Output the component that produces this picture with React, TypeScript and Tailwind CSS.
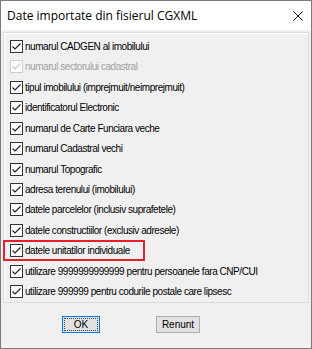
import React from 'react';

interface Item {
  label: string;
  disabled?: boolean;
  marked?: boolean;
}

const items: Item[] = [
  { label: 'numarul CADGEN al imobilului' },
  { label: 'numarul sectorului cadastral', disabled: true },
  { label: 'tipul imobilului (imprejmuit/neimprejmuit)' },
  { label: 'identificatorul Electronic' },
  { label: 'numarul de Carte Funciara veche' },
  { label: 'numarul Cadastral vechi' },
  { label: 'numarul Topografic' },
  { label: 'adresa terenului (imobilului)' },
  { label: 'datele parcelelor (inclusiv suprafetele)' },
  { label: 'datele constructiilor (exclusiv adresele)' },
  { label: 'datele unitatilor individuale', marked: true },
  { label: 'utilizare 9999999999999 pentru persoanele fara CNP/CUI' },
  { label: 'utilizare 999999 pentru codurile postale care lipsesc' },
];

const CheckBox: React.FC<{ disabled?: boolean }> = ({ disabled }) => (
  <span
    className={`flex h-[13px] w-[13px] shrink-0 items-center justify-center border bg-white ${
      disabled ? 'border-[#cccccc]' : 'border-[#333333]'
    }`}
  >
    <svg width="11" height="11" viewBox="0 0 11 11">
      <path
        d="M1.5 5.5 L4 8 L9.5 2.5"
        fill="none"
        stroke={disabled ? '#c4c4c4' : '#222222'}
        strokeWidth="1.2"
      />
    </svg>
  </span>
);

const Row: React.FC<{ item: Item }> = ({ item }) => (
  <div className="relative flex h-[20.8px] items-center gap-[2px] pl-[6px]">
    {item.marked && (
      <div className="absolute left-[-1px] top-[-1px] h-[21px] w-[142px] border-2 border-[#e4212b]" />
    )}
    <CheckBox disabled={item.disabled} />
    <span className={item.disabled ? 'text-[#a0a0a0]' : 'text-black'}>{item.label}</span>
  </div>
);

export default function App() {
  return (
    <div
      className="flex h-[349px] w-[312px] flex-col border border-[#7a7a7a] bg-[#f0f0f0] text-[10px] tracking-[-0.45px]"
      style={{ fontFamily: '"Liberation Sans", Arial, sans-serif' }}
    >
      <div className="flex h-[29px] shrink-0 items-center justify-between bg-white pl-[6px] pr-[8px]">
        <span className="text-[12px] tracking-normal text-black" style={{ fontFamily: '"Open Sans", sans-serif' }}>
          Date importate din fisierul CGXML
        </span>
        <svg width="10" height="10" viewBox="0 0 10 10">
          <path d="M0.5 0.5 L9.5 9.5 M9.5 0.5 L0.5 9.5" stroke="#111" strokeWidth="1" />
        </svg>
      </div>
      <div className="mx-[2px] mt-[2px] flex h-[271px] flex-col border border-[#dcdcdc] pt-[3px] shadow-[inset_1px_1px_0_#ffffff]">
        {items.map((item) => (
          <Row key={item.label} item={item} />
        ))}
      </div>
      <div className="flex gap-[56px] pl-[61px] pt-[13px] tracking-normal">
        <button className="flex h-[17px] w-[38px] items-center justify-center border border-[#0078d7] bg-[#e1e1e1] p-[1px]">
          <span className="flex h-full w-full items-center justify-center border border-dotted border-[#444]">
            OK
          </span>
        </button>
        <button className="flex h-[17px] w-[44px] items-center justify-center border border-[#adadad] bg-[#e1e1e1]">
          Renunt
        </button>
      </div>
    </div>
  );
}
